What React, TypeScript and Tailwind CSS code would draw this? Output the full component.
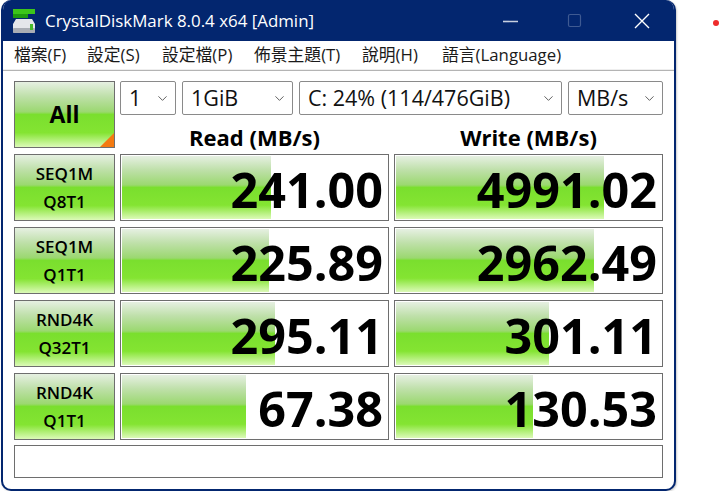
import React from 'react';
import { ChevronDown } from 'lucide-react';

const font = 'font-["Open_Sans","Noto_Sans_CJK_TC",sans-serif]';
const green =
  'bg-[linear-gradient(to_bottom,#e6f0e2_0%,#bfe0aa_22%,#9bd870_46%,#7adf2e_50%,#84e432_78%,#dcfab8_100%)]';

const menus = [
  { label: '檔案(F)', w: 'w-[73px]' },
  { label: '設定(S)', w: 'w-[75px]' },
  { label: '設定檔(P)', w: 'w-[92px]' },
  { label: '佈景主題(T)', w: 'w-[108px]' },
  { label: '說明(H)', w: 'w-[80px]' },
  { label: '語言(Language)', w: 'w-[130px]' },
];

const rows = [
  { top: 'SEQ1M', bottom: 'Q8T1', read: '241.00', readBar: 149, write: '4991.02', writeBar: 208 },
  { top: 'SEQ1M', bottom: 'Q1T1', read: '225.89', readBar: 147, write: '2962.49', writeBar: 198 },
  { top: 'RND4K', bottom: 'Q32T1', read: '295.11', readBar: 153, write: '301.11', writeBar: 153 },
  { top: 'RND4K', bottom: 'Q1T1', read: '67.38', readBar: 124, write: '130.53', writeBar: 137 },
];

function Select({ value, className }: { value: string; className: string }) {
  return (
    <div className={`${className} h-[34px] flex items-center justify-between pl-[8px] pr-[5px] border border-[#8a8a8a] rounded-[2px] bg-white`}>
      <span className="text-[21.5px] leading-none text-[#111]">{value}</span>
      <ChevronDown className="w-[15px] h-[15px] text-[#555]" strokeWidth={1.5} />
    </div>
  );
}

function Score({ value, bar }: { value: string; bar: number }) {
  return (
    <div className="relative w-[269px] h-[67px] p-[1px] border border-[#6e6e6e] bg-white">
      <div className={`h-full ${green}`} style={{ width: bar }} />
      <span className="absolute inset-0 flex items-center justify-end pr-[5px] pt-[3px] text-[48.5px] leading-none font-bold text-black">{value}</span>
    </div>
  );
}

function CaptionButtons() {
  return (
    <svg className="ml-auto mr-[24px] w-[147px] h-[16px]" viewBox="0 0 147 16" fill="none">
      <path d="M0 8.5h15" stroke="#c8d0e0" strokeWidth="1.6" />
      <rect x="65.5" y="1.5" width="12" height="12" rx="1.5" stroke="#3f5a92" strokeWidth="1.2" />
      <path d="M132 1l14 14M146 1L132 15" stroke="#fff" strokeWidth="1.4" />
    </svg>
  );
}

export default function App() {
  return (
    <div className={`relative w-[720px] h-[491px] bg-white overflow-hidden ${font}`}>
      <div className="flex flex-col ml-[1px] w-[675px] h-[491px] border-x-2 border-b-2 border-[#03266f] rounded-[10px] bg-white overflow-hidden shadow-[1px_1px_2px_#ccc]">
        <div className="h-[41px] shrink-0 flex items-center bg-[#03266f]">
          <svg className="ml-[10px] w-[23px] h-[24px]" viewBox="0 0 23 24">
            <rect x="0" y="0" width="22" height="5" fill="#3cc51a" />
            <rect x="0" y="5" width="15" height="4" fill="#1f9a10" />
            <path d="M3 10h16l3 5v7a2 2 0 0 1-2 2H2a2 2 0 0 1-2-2v-7z" fill="#e4e6ea" />
            <rect x="0" y="19" width="22" height="5" rx="1" fill="#a9adb4" />
            <rect x="17" y="15" width="3" height="6" fill="#46b92a" />
          </svg>
          <span className="ml-[9px] text-[16.9px] text-white">CrystalDiskMark 8.0.4 x64 [Admin]</span>
          <CaptionButtons />
        </div>

        <div className="h-[28px] shrink-0 flex items-center pl-[11px] text-[16.8px] text-[#1a1a1a]">
          {menus.map((m) => (
            <span key={m.label} className={`${m.w} shrink-0 whitespace-nowrap`}>{m.label}</span>
          ))}
        </div>
        <div className="h-[2px] shrink-0 bg-[#b4b4b4] border-t border-[#eee]" />

        <div className="flex flex-col pl-[11px] pt-[10px]">
          <div className="flex gap-[5px]">
            <div className={`relative w-[101px] h-[67px] flex items-center justify-center border border-[#6e6e6e] overflow-hidden ${green}`}>
              <span className="text-[23px] font-bold text-black">All</span>
              <div className="absolute right-0 bottom-0 w-[14px] h-[14px] bg-[#f47a10] [clip-path:polygon(100%_0,100%_100%,0_100%)]" />
            </div>
            <div className="flex flex-col">
              <div className="flex gap-[6px]">
                <Select value="1" className="w-[56px]" />
                <Select value="1GiB" className="w-[111px]" />
                <Select value="C: 24% (114/476GiB)" className="w-[263px]" />
                <Select value="MB/s" className="w-[95px]" />
              </div>
              <div className="flex gap-[5px] h-[33px]">
                <div className="w-[269px] text-center text-[22px] leading-[44px] font-bold text-black">Read (MB/s)</div>
                <div className="w-[269px] text-center text-[22px] leading-[44px] font-bold text-black">Write (MB/s)</div>
              </div>
            </div>
          </div>

          <div className="mt-[6px] flex flex-col gap-[6px]">
            {rows.map((r) => (
              <div key={r.top + r.bottom} className="flex gap-[5px]">
                <div className={`w-[101px] h-[67px] flex flex-col items-center justify-center border border-[#6e6e6e] text-[17px] leading-[28px] font-semibold text-black ${green}`}>
                  <span>{r.top}</span>
                  <span>{r.bottom}</span>
                </div>
                <Score value={r.read} bar={r.readBar} />
                <Score value={r.write} bar={r.writeBar} />
              </div>
            ))}
          </div>

          <div className="mt-[5px] w-[649px] h-[33px] border border-[#6e6e6e] bg-white" />
        </div>
      </div>
      <div className="absolute left-[713px] top-[20px] w-[6px] h-[6px] rounded-full bg-[#ee2b2b]" />
    </div>
  );
}
